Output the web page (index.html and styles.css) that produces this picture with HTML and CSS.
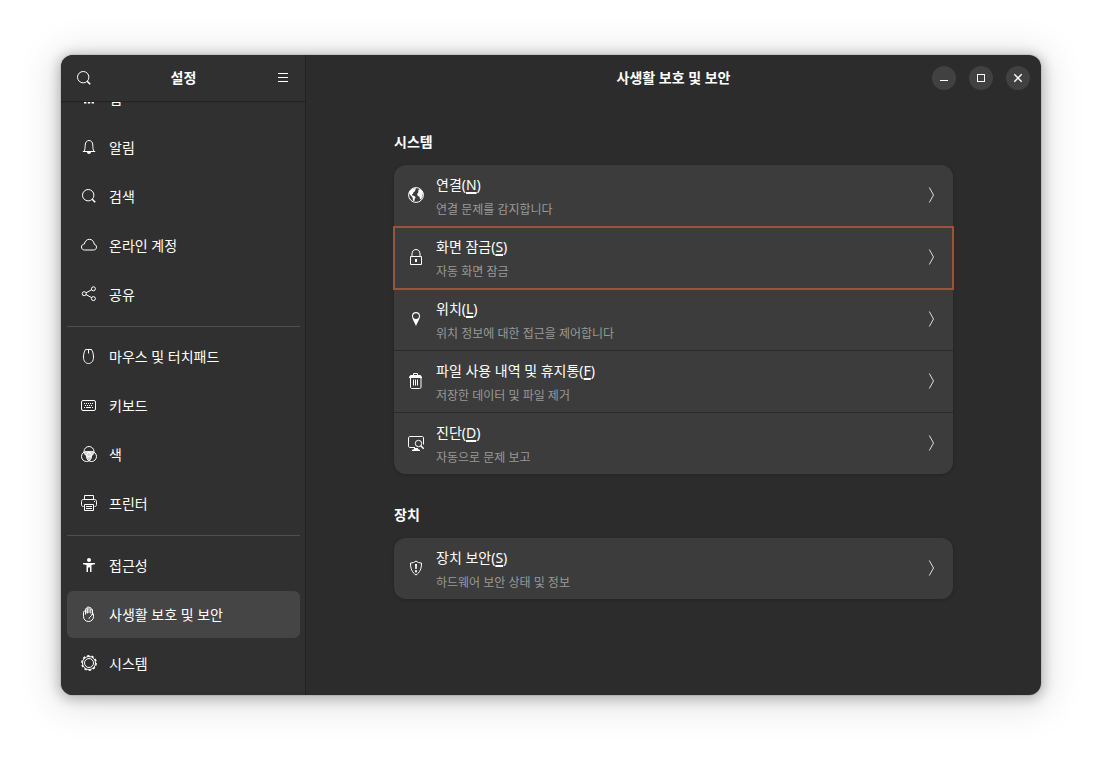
FILE: index.html
```html
<!DOCTYPE html>
<html lang="ko">
<head>
<meta charset="utf-8">
<title>설정</title>
<link rel="stylesheet" href="styles.css">
</head>
<body>
<div class="window">
  <aside class="sidebar">
    <header class="sidebar-header">
      <button class="icon-button" type="button" aria-label="검색">
        <svg class="icon" viewBox="0 0 16 16"><circle cx="7.2" cy="7.2" r="5.7"/><path d="M11.2 11.2l3 3" stroke-width="1.6"/></svg>
      </button>
      <h1 class="title">설정</h1>
      <button class="icon-button" type="button" aria-label="메뉴">
        <svg class="icon" viewBox="0 0 16 16"><path d="M3 3.5h10M3 7.5h10M3 11.5h10"/></svg>
      </button>
    </header>
    <nav class="nav">
      <a class="nav-item" href="#apps">
        <svg class="icon" viewBox="0 0 16 16"><path class="fill" d="M3 3h2.4v2.4H3zM6.8 3h2.4v2.4H6.8zM10.6 3H13v2.4h-2.4zM3 7h2.4v2.4H3zM6.8 7h2.4v2.4H6.8zM10.6 7H13v2.4h-2.4zM3 11h2.4v2.4H3zM6.8 11h2.4v2.4H6.8zM10.6 11H13v2.4h-2.4z"/></svg>
        <span>앱</span>
      </a>
      <a class="nav-item" href="#notifications">
        <svg class="icon" viewBox="0 0 16 16"><path d="M1.8 12.5h12.4M3 12.3C4.2 10.7 4 8.5 4.2 6 4.4 3 5.900 1.500 8 1.500s3.600 1.500 3.800 4.500c.2 2.500 0 4.700 1.200 6.300"/><path class="fill" d="M6 13h4c0 1.200-.8 2-2 2s-2-.8-2-2z"/></svg>
        <span>알림</span>
      </a>
      <a class="nav-item" href="#search">
        <svg class="icon" viewBox="0 0 16 16"><circle cx="7.2" cy="7.2" r="5.7"/><path d="M11.2 11.2l3 3" stroke-width="1.6"/></svg>
        <span>검색</span>
      </a>
      <a class="nav-item" href="#accounts">
        <svg class="icon" viewBox="0 0 16 16"><path d="M3.5 13C1.700 13 .5 11.700.5 10c0-1.600 1.200-2.900 2.900-3C3.900 4.200 5.700 2.300 8.300 2.300c2.700 0 4.600 1.900 4.900 4.900 1.400.3 2.300 1.400 2.300 2.900 0 1.700-1.200 2.900-2.900 2.900z"/></svg>
        <span>온라인 계정</span>
      </a>
      <a class="nav-item" href="#sharing">
        <svg class="icon" viewBox="0 0 16 16"><circle cx="3.2" cy="7.7" r="2"/><circle cx="12.400" cy="2.800" r="2"/><circle cx="12.400" cy="12.600" r="2"/><path d="M5 6.800l5.600-3M5 8.600l5.600 3"/></svg>
        <span>공유</span>
      </a>
      <hr class="divider">
      <a class="nav-item" href="#mouse">
        <svg class="icon" viewBox="0 0 16 16"><path d="M4.500 1.500h6c1.200 2 2 4.500 2 7.500 0 4-2 6.500-5 6.500s-5-2.500-5-6.500c0-3 .8-5.500 2-7.500zM7.500 1.500v4"/></svg>
        <span>마우스 및 터치패드</span>
      </a>
      <a class="nav-item" href="#keyboard">
        <svg class="icon" viewBox="0 0 16 16"><rect x=".5" y="3.500" width="14" height="10" rx="1.500"/><path class="fill" d="M3 6h1v1H3zM5 6h1v1H5zM7 6h1v1H7zM9 6h1v1H9zM11 6h1v1h-1zM4 8h1v1H4zM6 8h1v1H6zM8 8h1v1H8zM10 8h1v1h-1zM3 10h1v1H3zM5 10h5v1H5zM11 10h1v1h-1z"/></svg>
        <span>키보드</span>
      </a>
      <a class="nav-item" href="#color">
        <svg class="icon" viewBox="0 0 16 16"><path class="fill" d="M8 5c1.500 0 2.800.2 4.700.8-.2 1.700-.7 3-1.900 3.900-.1 2-.9 3.200-2.800 4.500-1.900-1.300-2.700-2.500-2.800-4.500C4 8.800 3.500 7.500 3.300 5.800 5.200 5.200 6.500 5 8 5z" opacity=".8"/><circle cx="8" cy="5.500" r="5"/><circle cx="5.500" cy="10.500" r="5"/><circle cx="10.500" cy="10.500" r="5"/></svg>
        <span>색</span>
      </a>
      <a class="nav-item" href="#printers">
        <svg class="icon" viewBox="0 0 16 16"><path d="M3.500 4.500v-4h9v4M2.500 11.500C1.200 11.500.5 11 .5 9.500v-3c0-1.300.7-2 2-2h11c1.300 0 2 .7 2 2v3c0 1.500-.7 2-2 2M3.500 9.500h9v6h-9zM5 11.500h6M5 13.500h6"/><path class="fill" d="M13 6h1v1h-1z"/></svg>
        <span>프린터</span>
      </a>
      <hr class="divider">
      <a class="nav-item" href="#accessibility">
        <svg class="icon" viewBox="0 0 16 16"><circle class="fill" cx="8" cy="3" r="2"/><path class="fill" d="M2 6h12v1.300l-3.500.7v7H9v-4.500H7V15H5.500V8L2 7.300z"/></svg>
        <span>접근성</span>
      </a>
      <a class="nav-item active" href="#privacy" aria-current="page">
        <svg class="icon" viewBox="0 0 16 16"><path d="M4.500 8.500V3.300c0-1.300 1.700-1.300 1.700 0V7.500M6.200 7V1.800c0-1.400 1.800-1.400 1.800 0V7M8 2.300c0-1.300 1.800-1.300 1.800 0V7.500M9.800 4c0-1.300 1.700-1.300 1.700 0v5M4.500 5.300c-1.200-.8-2 0-2 1.200v3.700c0 3.200 2 5.300 4.800 5.300 3 0 5.200-2 5.200-4.800V8.300c0-1-1-1.300-1.300-.3-.4 1.400-.9 2.100-2 2.800-.8.500-1.200 1.200-1.200 2"/></svg>
        <span>사생활 보호 및 보안</span>
      </a>
      <a class="nav-item" href="#system">
        <svg class="icon" viewBox="0 0 16 16"><circle cx="8" cy="8" r="4.500"/><circle cx="8" cy="8" r="6.500"/><circle cx="8" cy="8" r="7.200" stroke-width="1.400" stroke-dasharray="2.500 2.024"/></svg>
        <span>시스템</span>
      </a>
    </nav>
  </aside>
  <main class="main">
    <header class="main-header">
      <h2 class="title">사생활 보호 및 보안</h2>
      <div class="controls">
        <button class="control" type="button" aria-label="최소화"><svg class="icon" viewBox="0 0 16 16"><path d="M4 10.500h8"/></svg></button>
        <button class="control" type="button" aria-label="최대화"><svg class="icon" viewBox="0 0 16 16"><rect x="4.500" y="4.500" width="7" height="7"/></svg></button>
        <button class="control" type="button" aria-label="닫기"><svg class="icon" viewBox="0 0 16 16"><path d="M4.300 4.300l7.400 7.400M11.700 4.300l-7.400 7.400" stroke-width="1.400"/></svg></button>
      </div>
    </header>
    <div class="content">
      <section class="group">
        <h3 class="group-title">시스템</h3>
        <div class="card">
          <button class="row" type="button">
            <svg class="icon" viewBox="0 0 16 16"><circle cx="8" cy="8" r="7.400"/><path class="fill" d="M1.500 4.500L4 2l3-1 1.200.8L7 3l.3 1-1.800 1.300L5 6.700l-1 .5.3 1.300 2.200.4 1.200 1.300-1 1.700-.5 2.300-1.200-.4-.4-3L3 8.800 1 6.500zM10.300 3L12 2l2.500 2.600.8 2.400-1 .8.3 1.500-1.400 2.700-1.200.3-.5-2.600-2-1-.3-2 1.200-1.500z"/></svg>
            <span class="row-text"><span class="row-title">연결(<u>N</u>)</span><span class="row-sub">연결 문제를 감지합니다</span></span>
            <svg class="icon chevron" viewBox="0 0 16 16"><path d="M6.300.5L10.500 8l-4.200 7.500"/></svg>
          </button>
          <button class="row focused" type="button">
            <svg class="icon" viewBox="0 0 16 16"><path d="M2.500 7.500h11v8h-11zM4 7.500V5c0-2.700 1.600-4.500 4-4.500S12 2.300 12 5v2.500"/><path class="fill" d="M7 10h2v3H7z"/></svg>
            <span class="row-text"><span class="row-title">화면 잠금(<u>S</u>)</span><span class="row-sub">자동 화면 잠금</span></span>
            <svg class="icon chevron" viewBox="0 0 16 16"><path d="M6.300.5L10.500 8l-4.200 7.500"/></svg>
          </button>
          <button class="row" type="button">
            <svg class="icon" viewBox="0 0 16 16"><path class="fill" fill-rule="evenodd" d="M8 1c2.500 0 4 1.600 4 4 0 3-2.300 5.500-4 10-1.700-4.500-4-7-4-10 0-2.400 1.500-4 4-4zm0 1.200C6.200 2.200 5 3.300 5 5s1.200 3 3 3 3-1.300 3-3-1.200-2.800-3-2.800z"/></svg>
            <span class="row-text"><span class="row-title">위치(<u>L</u>)</span><span class="row-sub">위치 정보에 대한 접근을 제어합니다</span></span>
            <svg class="icon chevron" viewBox="0 0 16 16"><path d="M6.300.5L10.500 8l-4.200 7.500"/></svg>
          </button>
          <button class="row" type="button">
            <svg class="icon" viewBox="0 0 16 16"><path d="M5.500 2.500v-2h4v2M2.500 5v9c0 1 .5 1.500 1.500 1.500h7.500c1 0 1.500-.5 1.500-1.500V5M5.500 6.500v6M7.500 6.500v6M9.500 6.500v6"/><path class="fill" d="M2.500 2h10l1.500 2v1H1V4z"/></svg>
            <span class="row-text"><span class="row-title">파일 사용 내역 및 휴지통(<u>F</u>)</span><span class="row-sub">저장한 데이터 및 파일 제거</span></span>
            <svg class="icon chevron" viewBox="0 0 16 16"><path d="M6.300.5L10.500 8l-4.200 7.500"/></svg>
          </button>
          <button class="row" type="button">
            <svg class="icon" viewBox="0 0 16 16"><path d="M7 12.500H2c-1 0-1.500-.5-1.500-1.500V3c0-1 .5-1.500 1.500-1.500h12c1 0 1.500.5 1.500 1.500v6.500"/><circle cx="10.500" cy="8.500" r="3.200"/><path d="M12.800 10.800l2.900 3" stroke-width="1.500"/><path class="fill" d="M6 13h4v1l2 1v1H4v-1l2-1z"/></svg>
            <span class="row-text"><span class="row-title">진단(<u>D</u>)</span><span class="row-sub">자동으로 문제 보고</span></span>
            <svg class="icon chevron" viewBox="0 0 16 16"><path d="M6.300.5L10.500 8l-4.200 7.500"/></svg>
          </button>
        </div>
      </section>
      <section class="group">
        <h3 class="group-title">장치</h3>
        <div class="card">
          <button class="row" type="button">
            <svg class="icon" viewBox="0 0 16 16"><path d="M8 1C6.500 2.300 4.500 3 2.500 3c0 5.500 1.500 9.500 5.500 12 4-2.500 5.500-6.500 5.500-12-2 0-4-.7-5.500-2z"/><path class="fill" d="M7 4h2l-.3 5H7.300zM7 10.300h2v1.900H7z"/></svg>
            <span class="row-text"><span class="row-title">장치 보안(<u>S</u>)</span><span class="row-sub">하드웨어 보안 상태 및 정보</span></span>
            <svg class="icon chevron" viewBox="0 0 16 16"><path d="M6.300.5L10.500 8l-4.200 7.500"/></svg>
          </button>
        </div>
      </section>
    </div>
  </main>
</div>
</body>
</html>
```
FILE: styles.css
```css
* { box-sizing: border-box; }

body {
  margin: 0;
  height: 100vh;
  padding: 55px 61px 67px;
  background: #fff;
  color: #fff;
  font: 14px/22px "Noto Sans", "Noto Sans CJK KR", sans-serif;
}

button {
  padding: 0;
  border: 0;
  background: none;
  color: inherit;
  font: inherit;
  text-align: left;
}

h1, h2, h3 { margin: 0; font-size: 14px; font-weight: 700; }

.window {
  display: flex;
  height: 100%;
  border-radius: 12px;
  overflow: hidden;
  background: #2c2c2c;
  box-shadow: 0 0 0 1px rgba(0, 0, 0, .08), 0 2px 12px 3px rgba(0, 0, 0, .22), 0 4px 36px 10px rgba(0, 0, 0, .1);
}

.icon {
  display: block;
  flex: none;
  width: 16px;
  height: 16px;
  fill: none;
  stroke: currentColor;
}

.icon .fill { fill: currentColor; stroke: none; }

.sidebar {
  display: flex;
  flex-direction: column;
  flex: none;
  width: 245px;
  border-right: 1px solid #222;
  background: #303030;
}

.sidebar-header {
  display: flex;
  flex: none;
  align-items: center;
  justify-content: space-between;
  height: 47px;
  padding: 0 14px 0 15px;
  border-bottom: 1px solid #222;
  box-shadow: 0 1px 0 #2b2b2b;
}

.nav {
  display: flex;
  flex: 1;
  flex-direction: column;
  justify-content: flex-end;
  gap: 2px;
  min-height: 0;
  overflow: hidden;
  padding: 0 5px 8px 6px;
}

.nav-item {
  display: flex;
  flex: none;
  align-items: center;
  gap: 12px;
  height: 47px;
  padding: 0 14px;
  border-radius: 6px;
  color: inherit;
  text-decoration: none;
}

.nav-item .icon { margin-bottom: 1px; }

.nav-item.active { background: #454545; }

.divider {
  flex: none;
  width: 100%;
  height: 1px;
  margin: 6px 0 4px;
  border: 0;
  background: #4f4f4f;
}

.main {
  display: flex;
  flex: 1;
  flex-direction: column;
  min-width: 0;
}

.main-header {
  display: grid;
  grid-template-columns: 1fr auto 1fr;
  align-items: center;
  flex: none;
  height: 46px;
  padding: 0 11px;
}

.main-header .title { grid-column: 2; }

.controls { display: flex; justify-content: flex-end; gap: 13px; }

.control {
  display: grid;
  place-items: center;
  width: 24px;
  height: 24px;
  border-radius: 50%;
  background: #414141;
}

.content {
  width: 100%;
  max-width: 583px;
  margin: 0 auto;
  padding: 30px 12px;
}

.group + .group { margin-top: 30px; }

.group-title { margin-bottom: 12px; }

.card {
  border-radius: 12px;
  background: #3c3c3c;
  box-shadow: 0 1px 3px 1px rgba(0, 0, 0, .12);
}

.row {
  display: flex;
  align-items: center;
  gap: 12px;
  width: 100%;
  padding: 9px 14px 7px;
  border-bottom: 1px solid #2a2a2a;
}

.row:last-child { border-bottom: 0; }

.row .icon { margin-bottom: 3px; }

.row.focused {
  border-bottom-color: transparent;
  outline: 2px solid #98543c;
  outline-offset: -1px;
}

.row-text { flex: 1; min-width: 0; }

.row-title, .row-sub { display: block; }

.row-title u {
  text-decoration-thickness: 2px;
  text-underline-offset: 2px;
}

.row-sub {
  margin-top: 5px;
  color: #999;
  font-size: 12px;
  line-height: 18px;
}

.chevron { color: #ddd; }
```
